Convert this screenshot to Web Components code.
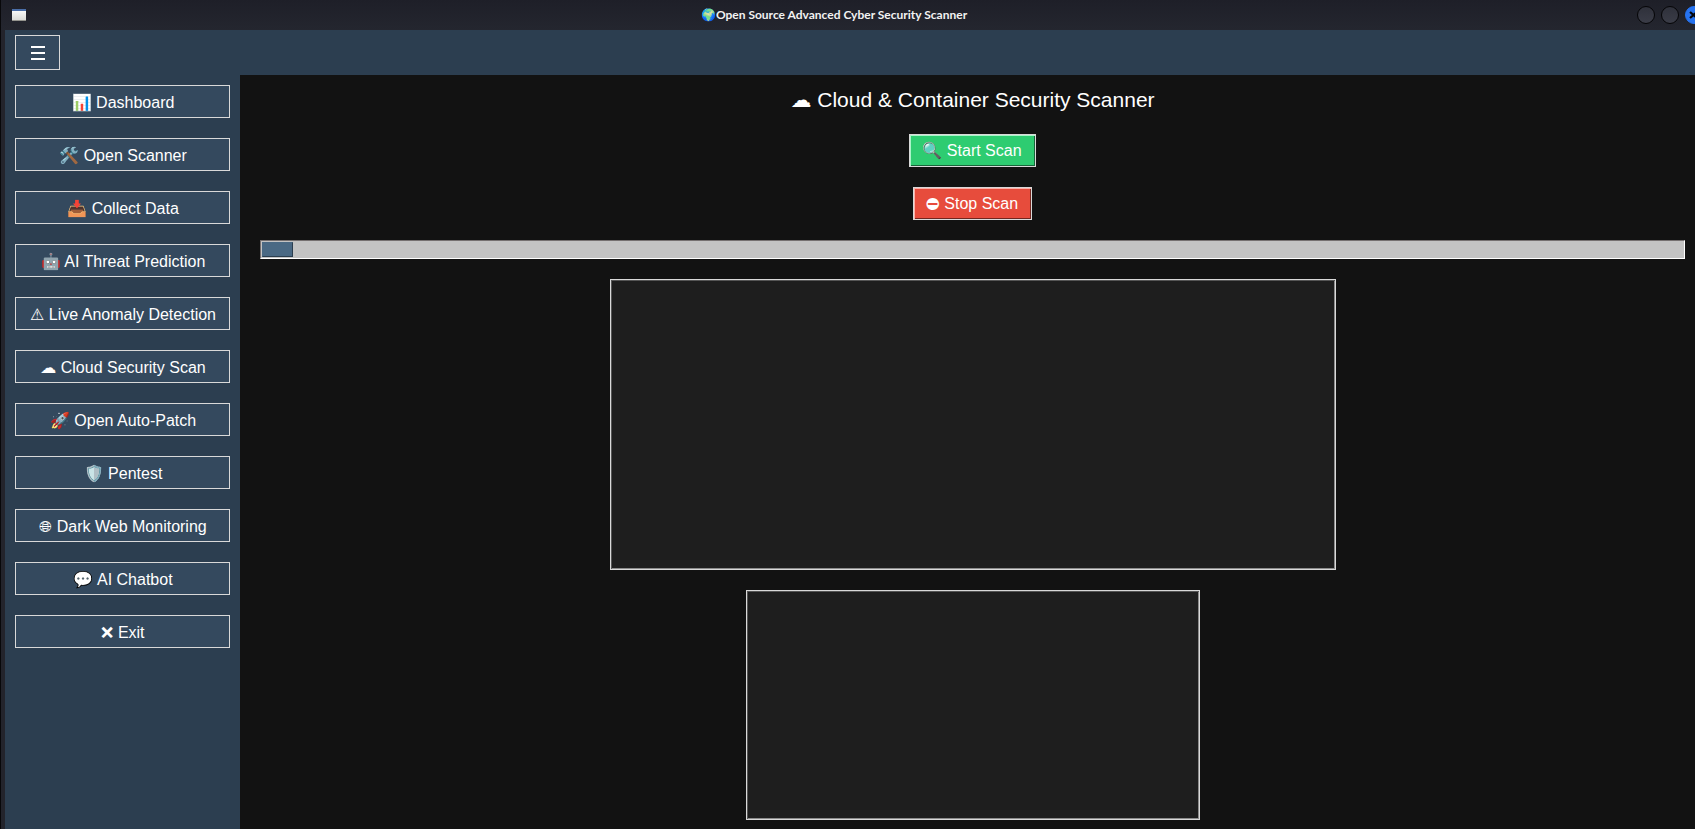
<!DOCTYPE html>
<html lang="en">
<head>
<meta charset="utf-8">
<title>Open Source Advanced Cyber Security Scanner</title>
<style>
  html, body { margin: 0; height: 100%; background: #121212; }
  body { font-family: "Liberation Sans", Arial, "DejaVu Sans", sans-serif; color: #fff; }
</style>
</head>
<body>
<scanner-window>
  <title-bar slot="title">🌍Open Source Advanced Cyber Security Scanner</title-bar>
  <tool-strip slot="tools"></tool-strip>
  <side-nav slot="nav">
    <nav-item>📊 Dashboard</nav-item>
    <nav-item>🛠️ Open Scanner</nav-item>
    <nav-item>📥 Collect Data</nav-item>
    <nav-item>🤖 AI Threat Prediction</nav-item>
    <nav-item>⚠ Live Anomaly Detection</nav-item>
    <nav-item>☁ Cloud Security Scan</nav-item>
    <nav-item>🚀 Open Auto-Patch</nav-item>
    <nav-item>🛡️ Pentest</nav-item>
    <nav-item>🌐&#xFE0E; Dark Web Monitoring</nav-item>
    <nav-item>💬 AI Chatbot</nav-item>
    <nav-item>❌&#xFE0E; Exit</nav-item>
  </side-nav>
  <scan-panel>
    <span slot="heading">☁ Cloud &amp; Container Security Scanner</span>
    <scan-button kind="start">🔍 Start Scan</scan-button>
    <scan-button kind="stop">⛔&#xFE0E; Stop Scan</scan-button>
    <scan-progress slot="output"></scan-progress>
    <output-box slot="output" label="Scan results" size="large"></output-box>
    <output-box slot="output" label="Scan log" size="small"></output-box>
  </scan-panel>
</scanner-window>
<script>
const define = (name, html, setup) => {
  const template = document.createElement("template");
  template.innerHTML = html;
  customElements.define(name, class extends HTMLElement {
    constructor() {
      super();
      this.attachShadow({ mode: "open" }).append(template.content.cloneNode(true));
    }
    connectedCallback() { if (setup) setup(this); }
  });
};

define("scanner-window", `
<style>
  :host { display: flex; flex-direction: column; box-sizing: border-box; min-height: 100vh; overflow: hidden; background: #121212; border-left: 1px solid #08080a; }
  .frame { flex: 1; display: flex; flex-direction: column; border-left: 4px solid #23242c; }
  .body { flex: 1; display: flex; }
  ::slotted(scan-panel) { flex: 1; min-width: 0; }
</style>
<slot name="title"></slot>
<div class="frame">
  <slot name="tools"></slot>
  <div class="body"><slot name="nav"></slot><slot></slot></div>
</div>`);

define("title-bar", `
<style>
  :host { display: grid; grid-template-columns: 1fr auto 1fr; align-items: center; height: 30px;
    background: linear-gradient(#1e1f28, #24262f); overflow: hidden; }
  .app { margin-left: 10px; width: 16px; height: 14px; display: block; }
  h1 { margin: 0 28px 0 0; font: 700 12px/16px Lato, "Noto Sans", sans-serif; color: #f2f2f2; white-space: nowrap; }
  .controls { display: flex; justify-content: flex-end; gap: 6px; margin-right: -8px; }
  button { box-sizing: border-box; width: 18px; height: 18px; padding: 0; border: 1px solid #050507; border-radius: 50%;
    background: linear-gradient(#2f313b, #3a3c47); display: grid; place-items: center; }
  .close { background: #2673f0; border-color: #2673f0; }
</style>
<svg class="app" viewBox="0 0 16 14"><defs><linearGradient id="g" x2="0" y2="1"><stop stop-color="#fff"/><stop offset="1" stop-color="#d8d8d4"/></linearGradient></defs><rect x="1" y="1" width="14" height="12" fill="url(#g)"/><rect x="1" y="1" width="14" height="2" fill="#4a6ea8"/><path d="M1 12.500h14" stroke="#94948e"/></svg>
<h1><slot></slot></h1>
<div class="controls">
  <button aria-label="Minimize"></button><button aria-label="Maximize"></button>
  <button class="close" aria-label="Close"><svg width="10" height="10" viewBox="0 0 10 10"><path d="M1 2l7 6M8 2l-7 6" stroke="#05070c" stroke-width="2.200"/></svg></button>
</div>`);

define("tool-strip", `
<style>
  :host { display: flex; padding: 5px 10px; background: #2c3e50; }
  button { box-sizing: border-box; width: 45px; height: 35px; padding: 0 0 0 1px; border: 1px solid #d9d9d9; background: #34495e;
    display: grid; place-items: center; }
</style>
<button aria-label="Toggle menu"><svg width="14" height="14" viewBox="0 0 14 14"><path d="M0 1h14M0 7h14M0 13h14" stroke="#fff" stroke-width="2"/></svg></button>`);

define("side-nav", `
<style>
  :host { display: block; box-sizing: border-box; width: 235px; background: #2c3e50; }
  nav { display: flex; flex-direction: column; gap: 20px; padding: 10px; }
</style>
<nav aria-label="Main"><slot></slot></nav>`);

define("nav-item", `
<style>
  :host { display: block; }
  button { box-sizing: border-box; width: 100%; height: 33px; padding: 2px 0 0 1px; border: 1px solid #d9d9d9; background: #34495e;
    color: #fff; font: inherit; font-size: 16px; line-height: 29px; white-space: nowrap; }
</style>
<button><slot></slot></button>`);

define("scan-panel", `
<style>
  :host { display: flex; flex-direction: column; align-items: center; gap: 20px; padding: 10px 10px 10px 20px; background: #121212; box-sizing: border-box; }
  h2 { margin: 0; font-size: 21px; font-weight: 400; line-height: 29px; }
  ::slotted(scan-progress) { align-self: stretch; }
</style>
<h2><slot name="heading"></slot></h2>
<slot></slot>
<slot name="output"></slot>`);

define("scan-button", `
<style>
  :host { display: block; }
  :host([kind="start"]) { --fill: #2ecc71; --light: #a9f5c8; --dark: #17663a; }
  :host([kind="stop"]) { --fill: #e74c3c; --light: #ffb0a8; --dark: #73261e; }
  button { box-sizing: border-box; height: 33px; padding: 0 13px 0 12px; border: 1px solid #d9d9d9; background: var(--fill);
    box-shadow: inset 1px 1px var(--light), inset -1px -1px var(--dark);
    color: #fff; font: inherit; font-size: 16px; line-height: 31px; white-space: nowrap; display: block; }
</style>
<button><slot></slot></button>`);

define("scan-progress", `
<style>
  :host { display: block; }
  .track { box-sizing: border-box; height: 19px; background: #c3c3c3; border: 1px solid; border-color: #757070 #fff #fff #757070; padding: 1px; }
  .bar { box-sizing: border-box; width: 31px; height: 100%; background: #4a6984; border: 1px solid; border-color: #4a6984 #2b3e4f #2b3e4f #4a6984; }
</style>
<div class="track" role="progressbar" aria-label="Scan progress"><div class="bar"></div></div>`);

define("output-box", `
<style>
  :host { display: block; max-width: 100%; }
  :host([size="large"]) { width: 726px; height: 291px; }
  :host([size="small"]) { width: 454px; height: 230px; }
  textarea { display: block; box-sizing: border-box; width: 100%; height: 100%; resize: none; margin: 0; padding: 4px;
    border: 1px solid #d9d9d9; background: #1e1e1e; color: #fff; font: 14px "Liberation Mono", monospace; outline: none;
    box-shadow: inset 1px 1px #555, inset -1px -1px #8b8b8b; }
</style>
<textarea readonly></textarea>`, el => {
  el.shadowRoot.querySelector("textarea").setAttribute("aria-label", el.getAttribute("label"));
});
</script>
</body>
</html>
